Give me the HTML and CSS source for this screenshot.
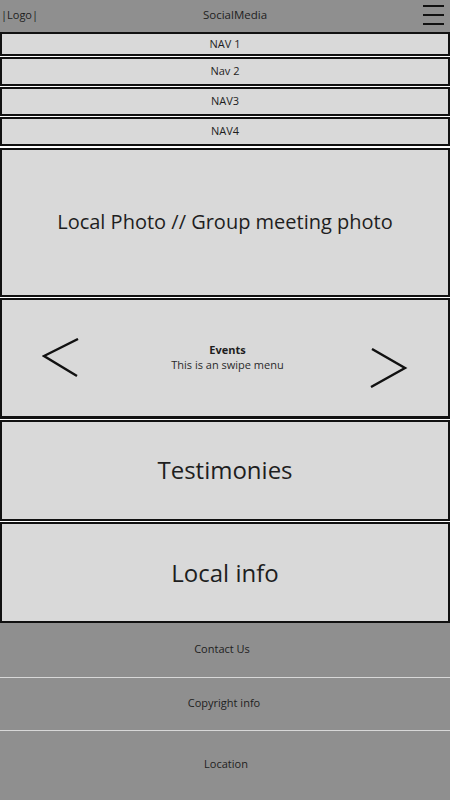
FILE: index.html
```html
<!DOCTYPE html>
<html>
<head>
<meta charset="utf-8">
<link rel="stylesheet" href="styles.css">
</head>
<body>
<header class="topbar">
  <span class="logo">|Logo|</span>
  <span class="site-title">SocialMedia</span>
  <svg class="burger" width="22" height="22" viewBox="0 0 22 22">
    <rect x="0" y="0" width="21" height="2" fill="#111"/>
    <rect x="0" y="9" width="21" height="2" fill="#111"/>
    <rect x="0" y="18" width="21" height="2" fill="#111"/>
  </svg>
</header>
<nav class="nav">
  <div class="nav-item n1">NAV 1</div>
  <div class="nav-item n2">Nav 2</div>
  <div class="nav-item n3">NAV3</div>
  <div class="nav-item n4">NAV4</div>
</nav>
<main class="content">
  <section class="box photo">Local Photo // Group meeting photo</section>
  <section class="box events">
    <svg class="chev chev-left" width="40" height="40" viewBox="0 0 40 40">
      <polyline points="36,1 2,18 35,38" fill="none" stroke="#111" stroke-width="2.4"/>
    </svg>
    <div class="events-text">
      <div class="events-title">Events</div>
      <div class="events-sub">This is an swipe menu</div>
    </div>
    <svg class="chev chev-right" width="40" height="40" viewBox="0 0 40 40">
      <polyline points="3,1 36,20 2,39" fill="none" stroke="#111" stroke-width="2.4"/>
    </svg>
  </section>
  <section class="box big testi">Testimonies</section>
  <section class="box big localinfo">Local info</section>
</main>
<footer class="footer">
  <div class="foot-row contact">Contact Us</div>
  <div class="foot-row copy">Copyright info</div>
  <div class="foot-row location">Location</div>
</footer>
</body>
</html>
```

FILE: styles.css
```css
* { box-sizing: border-box; }
html, body { margin: 0; padding: 0; }
body {
  width: 450px;
  height: 800px;
  overflow: hidden;
  background: #ffffff;
  font-family: "Open Sans", "Noto Sans", sans-serif;
  color: #1e1e1e;
}
.topbar {
  height: 32px;
  background: #8f8f8f;
  display: flex;
  align-items: center;
  padding: 0 5px 3px 1px;
}
.logo { font-size: 11px; width: 40px; }
.site-title {
  flex: 1;
  text-align: center;
  font-size: 11.5px;
  padding-left: 6px;
}
.burger { align-self: flex-start; margin-top: 5px; }
.nav { display: flex; flex-direction: column; }
.nav-item {
  background: #d9d9d9;
  border: 2px solid #111;
  display: flex;
  align-items: center;
  justify-content: center;
  font-size: 11px;
  padding-bottom: 2px;
}
.n1 { height: 24px; margin-bottom: 1px; }
.n2 { height: 29px; margin-bottom: 1px; }
.n3 { height: 29px; margin-bottom: 1px; }
.n4 { height: 29px; margin-bottom: 2px; }
.content { display: flex; flex-direction: column; }
.box {
  background: #d9d9d9;
  border: 2px solid #111;
  display: flex;
  align-items: center;
  justify-content: center;
}
.photo { height: 149px; margin-bottom: 1px; font-size: 20px; padding-bottom: 2px; }
.events {
  height: 121px;
  margin-bottom: 1px;
  justify-content: space-between;
  padding: 0 40px 0 40px;
  border-bottom-width: 3px;
}
.chev-left { margin-top: 0; }
.chev-right { margin-top: 20px; margin-right: -1px; }
.events-text { text-align: center; margin-top: -3px; margin-left: 4px; }
.events-title { font-size: 11px; font-weight: 700; line-height: 15px; }
.events-sub { font-size: 11px; line-height: 15px; color: #2a2a2a; }
.big { height: 101px; font-size: 24px; margin-bottom: 1px; }
.testi { padding-bottom: 2px; }
.localinfo { margin-bottom: 0; padding-bottom: 0; }
.footer { background: #8f8f8f; display: flex; flex-direction: column; height: 178px; }
.foot-row {
  display: flex;
  align-items: center;
  justify-content: center;
  font-size: 11px;
}
.contact { height: 55px; border-bottom: 1px solid #d8d8d8; padding-right: 6px; padding-bottom: 4px; }
.copy { height: 53px; border-bottom: 1px solid #d8d8d8; padding-right: 2px; padding-bottom: 4px; }
.location { flex: 1; padding-bottom: 6px; padding-left: 2px; }
```
